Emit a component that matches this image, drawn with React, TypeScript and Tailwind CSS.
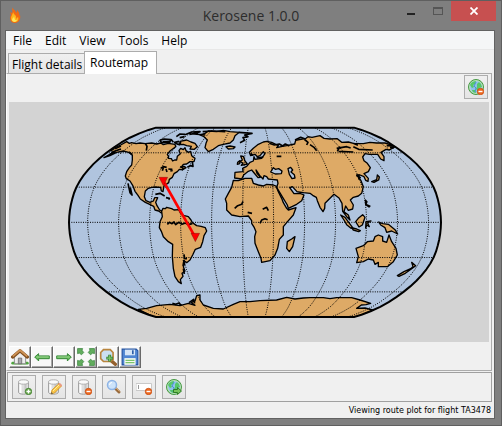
import React, { useState } from "react";

/* ---------- Map ---------- */

// Robinson projection table, one entry for every 5 degrees of latitude.
const ROB_X = [1, 0.9986, 0.9954, 0.99, 0.9822, 0.973, 0.96, 0.9427, 0.9216, 0.8962, 0.8679, 0.835, 0.7986, 0.7597, 0.7186, 0.6732, 0.6213, 0.5722, 0.5322];
const ROB_Y = [0, 0.062, 0.124, 0.186, 0.248, 0.31, 0.372, 0.434, 0.4958, 0.5571, 0.6176, 0.6769, 0.7346, 0.7903, 0.8435, 0.8936, 0.9394, 0.9761, 1];
const CENTRE = { x: 765, y: 667, lon: 12 };

function project(lon: number, lat: number): string {
  const i = Math.abs(lat) / 5;
  const x = CENTRE.x + 3.1 * (lon - CENTRE.lon) * ROB_X[i];
  const y = CENTRE.y - 284 * ROB_Y[i] * Math.sign(lat);
  return `${x.toFixed(1)},${y.toFixed(1)}`;
}

const LATS = Array.from({ length: 37 }, (_, i) => i * 5 - 90);
const meridian = (lon: number) => LATS.map((lat) => project(lon, lat));
const OUTLINE = [...meridian(-168), ...meridian(192).reverse()].join(" ");
const MERIDIANS = Array.from({ length: 12 }, (_, i) => meridian(i * 30 - 150).join(" "));
const PARALLELS = [-60, -30, 0, 30, 60].map((lat) => `${project(-168, lat)} ${project(192, lat)}`);

const LAND = [
  // North and Central America
  "312,473 330,463 345,455 330,452 345,443 362,435 380,425 388,430 395,428 408,431 420,429 436,431 455,429 470,432 482,429 490,434 505,430 525,433 527,440 510,453 502,463 506,470 505,475 514,476 518,483 524,480 530,480 532,469 541,461 537,452 542,445 550,449 555,443 558,452 565,457 572,454 575,467 585,475 582,485 570,485 560,492 550,493 545,500 552,499 558,503 548,509 538,508 532,515 522,521 517,532 508,538 506,548 492,558 490,568 489,575 484,573 482,562 466,561 455,562 445,565 436,573 433,590 438,602 450,607 460,603 464,593 473,593 467,607 471,617 479,630 491,635 484,639 476,633 465,630 461,619 449,613 436,607 421,597 414,586 405,574 398,556 390,543 379,536 376,528 380,515 388,503 395,495 397,480 397,466 386,457 370,453 350,457 330,467",
  // South America
  "485,634 489,625 496,626 500,622 515,626 522,630 536,629 542,640 550,646 565,650 573,660 577,668 590,677 603,679 616,683 620,693 612,707 608,725 602,742 586,748 578,765 570,780 560,788 550,781 554,792 550,800 555,813 546,820 549,829 541,839 544,851 535,845 525,830 520,805 517,770 518,733 505,725 490,710 484,694 478,683 480,665 487,650",
  // Greenland and Iceland
  "615,400 625,393 650,395 670,391 690,395 718,397 705,407 700,420 690,429 670,433 655,437 640,448 625,455 615,443 618,430 622,420 612,410 600,405",
  "678,440 690,438 705,441 700,446 685,447",
  // Baffin Island
  "540,424 560,420 573,426 585,430 592,440 583,448 570,447 574,439 560,437 550,433 540,434",
  // Africa
  "700,541 715,542 735,535 755,535 760,550 775,555 790,558 800,553 820,555 828,558 835,575 845,595 850,608 860,625 865,630 888,623 880,645 860,668 850,680 850,705 838,718 835,735 833,745 825,765 810,782 785,787 783,775 775,755 765,730 764,710 768,695 763,683 755,670 755,662 745,648 720,650 695,645 680,630 680,610 676,597 685,580 695,562",
  // Europe and Asia
  "704,534 705,517 729,515 728,505 740,499 750,487 760,483 762,470 765,478 785,475 795,461 790,455 780,467 772,470 765,463 752,467 748,457 760,445 775,433 790,426 800,424 815,427 835,437 830,443 847,439 860,437 884,432 887,421 907,417 918,415 924,410 936,412 960,407 972,415 990,417 1012,416 1025,427 1045,426 1060,430 1090,431 1110,427 1130,429 1155,429 1187,439 1168,450 1158,448 1143,457 1152,470 1152,482 1142,477 1133,463 1120,463 1108,463 1095,461 1088,471 1092,482 1102,490 1111,503 1105,515 1092,521 1105,535 1104,544 1097,541 1092,530 1080,525 1070,525 1076,532 1083,542 1090,560 1085,580 1075,588 1060,592 1051,600 1060,615 1058,627 1045,631 1037,618 1032,635 1045,645 1050,660 1040,650 1028,634 1026,610 1017,594 1002,583 990,595 975,610 974,625 969,635 960,622 952,602 949,592 938,586 930,580 910,578 891,575 877,560 869,563 882,581 900,580 912,585 905,602 890,613 865,625 862,615 848,592 830,562 834,550 832,540 814,538 805,537 800,530 792,527 789,537 779,526 768,510 771,520 781,532 774,533 765,522 755,510 745,514 731,525 725,537",
  // British Isles
  "720,485 727,480 722,468 730,469 735,483 742,492 724,496 729,489",
  "713,487 720,482 719,491 712,493",
  // Madagascar
  "885,710 878,740 868,755 860,745 862,725 875,717",
  // Australia and New Guinea
  "1070,788 1075,770 1068,745 1090,737 1102,725 1120,723 1125,710 1135,705 1148,710 1148,723 1160,727 1167,705 1175,725 1188,745 1192,765 1180,785 1162,800 1135,800 1135,787 1125,793 1120,780 1105,777 1090,785",
  "1136,666 1148,671 1165,673 1185,689 1193,702 1175,693 1160,697 1155,683 1142,675",
  // Indonesia, Philippines
  "1022,645 1035,652 1046,667 1058,683 1053,685 1040,674 1032,660",
  "1055,683 1070,687 1081,692 1076,695 1060,690",
  "1067,665 1075,655 1088,644 1095,652 1087,675 1077,681",
  "1098,665 1113,663 1103,669 1108,680 1100,675 1097,684",
  "1096,600 1101,605 1098,613 1110,618 1107,621 1097,614",
  // Japan, New Zealand
  "1115,545 1130,539 1132,525 1138,531 1136,540 1122,547",
  "1192,827 1212,815 1232,806 1239,800 1235,787 1247,797 1235,806 1216,820 1197,829",
  // Antarctica
  "415,928 440,925 470,917 510,913 540,917 565,910 585,916 573,907 585,903 590,887 600,885 600,900 610,915 640,925 670,927 700,913 720,905 750,905 780,902 830,900 860,892 885,897 910,894 930,893 970,893 990,896 1010,893 1055,893 1080,900 1112,910 1098,914 1084,915 1070,925 1095,924 1118,930 1065,955 470,955",
];

const SEAS = [
  "812,516 820,503 826,508 836,506 846,513 844,521 826,522",
  "864,506 872,502 878,510 873,516 883,524 885,534 876,536 868,523",
];

// Small islands, lakes and broken coastlines, drawn as strokes only.
const DETAILS = [
  "M345,446l18-8m-20,16l20-7m-23,9l-13,10m4,-16l12-4",
  "M436,430l5,9-2,13m-42,12l-10-8M384,550l6,28 6,7-5-22",
  "M480,421l12-4 20,2-3,8-24,1zm8,4h20m5-7 7,9",
  "M482,505l8-5 10,2m-13,10 3-9m8,4 3,9m4-9 12,1m-6,5 7-2",
  "M522,428l15-4m-8-14 11-8 15,1m-16,10 15-3m-28,20 12,4 5-7",
  "M555,404l20-8 25-1-18,7 34,3m-48-2 26-4m14-4 30-2 38,2m40,2 40,3-22,5 10,5-15,3 5,8-14,7",
  "M466,583l14-3 14,8m4,5 10,2-2,4",
  "M502,673l6-6 8,4 6-5 5,8 9-7 10,6 10-4 8,5 13-3",
  "M552,763l2,13 7,0m-9,5-3,17m1,8 3,16",
  "M540,500l8,3m14-1 9-5 8,2-2-13M551,503l-5,8",
  "M752,460l7,6m11,8 20-3M808,430l15,5 15-3 10,6 8-6 12,6M885,420l17-8 14,5m-4,0 12,10-4,8",
  "M830,469l14,0 M704,625l9-8 12-4 4-9m14,33 13,3",
  "M788,628l12-6 5,10M780,670l5-10 10-4 8,3",
  "M930,434l12,8 8,10M1010,445l30-5 12,4m-36,10 44,2M1020,440l-8,14M1060,440l16,8 42,2M1060,430l14,6M1160,437l24,1m-14,5 12,0M1070,525l12,9m-8-8 4,13M1069,528l10-3",
  "M567,908l14-10 3,12M517,910l10,3 10-4 6,7",
];

function RouteMap() {
  return (
    <svg viewBox="27 306 1440 720" className="block h-full w-full" role="img" aria-label="Route map">
      <defs>
        <clipPath id="globe">
          <polygon points={OUTLINE} />
        </clipPath>
      </defs>
      <polygon points={OUTLINE} fill="#b0c4de" />
      <g clipPath="url(#globe)" stroke="#000" strokeWidth="4" strokeLinejoin="round">
        {LAND.map((points) => (
          <polygon key={points} points={points} fill="#deaa66" />
        ))}
        {SEAS.map((points) => (
          <polygon key={points} points={points} fill="#b0c4de" />
        ))}
        {DETAILS.map((d) => (
          <path key={d} d={d} fill="none" strokeWidth="5" />
        ))}
      </g>
      <g fill="none" stroke="#000" strokeWidth="3" strokeDasharray="3 4">
        {[...MERIDIANS, ...PARALLELS].map((points) => (
          <polyline key={points} points={points} />
        ))}
      </g>
      <polygon points={OUTLINE} fill="none" stroke="#000" strokeWidth="6" strokeLinejoin="round" />
      <path d="M490,543 586,712" stroke="#f00" strokeWidth="8" />
      <g fill="#f00" stroke="#500" strokeWidth="1">
        <path d="M477,532h26l-13,25z" />
        <path d="M573,700h26l-13,25z" />
      </g>
    </svg>
  );
}

/* ---------- Icons ---------- */

function Icon({ children, size = "size-4" }: { children: React.ReactNode; size?: string }) {
  return (
    <svg viewBox="0 0 16 16" className={size} aria-hidden="true">
      {children}
    </svg>
  );
}

const Flame = () => (
  <Icon>
    <path d="M5 0c0 2 4 3 4 6 1-1 1-2 1-3 2 2 3 4 2 6l1-1c1 4-1 8-5 8-5 0-6-5-4-8L3 5l2 1c1-2 0-4 0-6z" fill="#f26a12" />
    <path d="M6 5c0 2-2 4-2 6 0 3 2 4 4 4 3 0 4-3 3-5l-2 2c1-3-1-4-2-5z" fill="#ffb51c" />
    <path d="M7 9c0 2-2 2-2 4s4 3 5 0l-2 0z" fill="#ffe65a" />
  </Icon>
);

const Minus = () => (
  <>
    <circle cx="12.500" cy="12.500" r="3.200" fill="#ee6a22" stroke="#c84a0c" strokeWidth="0.800" />
    <path d="M10.500 12.500h4" stroke="#fff" strokeWidth="1.400" />
  </>
);

const Globe = () => (
  <>
    <circle cx="8" cy="8" r="7.500" fill="#8fcf8a" stroke="#479a45" />
    <circle cx="8" cy="8" r="6.300" fill="#8fc1ea" stroke="#d4eecb" strokeWidth="0.700" />
    <path d="M2 6c1-3 4-4 6-4L7 5 5 6l1 2-2 1zM9 5l2-2 2 2 1 3-3 1-1 3-2-2 1-2zM4 11l3 0 1 3C6 14 4 13 4 11z" fill="#55c868" />
    <path d="M8 3 6 7l2 2-1 4" stroke="#4a91d0" fill="none" />
  </>
);

const Cylinder = () => (
  <>
    <path d="M2.500 3v10c0 3 10 3 10 0V3" fill="#dedede" stroke="#a4a4a4" />
    <path d="M4.500 5v9" stroke="#fff" strokeWidth="2" />
    <path d="M9.500 5v9.500" stroke="#c4c4c4" strokeWidth="2" />
    <ellipse cx="7.500" cy="3" rx="5" ry="2.200" fill="#fafafa" stroke="#b0b0b0" />
  </>
);

const GlobeRemove = () => <Icon><Globe /><Minus /></Icon>;

const GlobeGo = () => (
  <Icon>
    <Globe />
    <path d="M7.500 10.500h4v-2l4 3.500-4 3.500v-2h-4z" fill="#78c45c" stroke="#2e7d25" />
  </Icon>
);

const RecordAdd = () => (
  <Icon>
    <Cylinder />
    <circle cx="12.500" cy="12.500" r="3.200" fill="#6aa84f" stroke="#3f7d2b" strokeWidth="0.800" />
    <path d="M10.500 12.500h4m-2-2v4" stroke="#fff" strokeWidth="1.300" />
  </Icon>
);

const RecordEdit = () => (
  <Icon>
    <Cylinder />
    <path d="M5 15l1-4 7-6.500 2.500 2.500-7 7z" fill="#f9c74a" stroke="#cf8e1b" strokeWidth="0.800" />
    <path d="M7 12l6-6" stroke="#fff0a0" />
    <path d="M13 4.500 15.500 7" stroke="#e99b83" strokeWidth="2" />
    <path d="M5 15l.5-2 1.500 1.500z" fill="#555" />
  </Icon>
);

const RecordRemove = () => <Icon><Cylinder /><Minus /></Icon>;

const Magnifier = () => (
  <Icon>
    <path d="M9 9l4 4" stroke="#9a6b3c" strokeWidth="3" strokeLinecap="round" />
    <path d="M10 9l3.500 3.500" stroke="#d8a46a" />
    <circle cx="6" cy="6" r="4.500" fill="#cde3fa" stroke="#8eb4e6" strokeWidth="1.500" />
    <path d="M3.500 6A2.500 2.500 0 0 1 6 3.500" stroke="#fff" fill="none" />
  </Icon>
);

const FieldRemove = () => (
  <Icon>
    <path d="M0 4.500h15.500v7H0z" fill="#fff" stroke="#c9c9c9" />
    <path d="M2.500 6v4" stroke="#999" />
    <Minus />
  </Icon>
);

const Home = () => (
  <Icon size="size-[18px]">
    <path d="M1.500 13.500h13" stroke="#4ea63e" strokeWidth="2.500" strokeLinecap="round" />
    <path d="M3 7l5-4 5 4v7H3z" fill="#eee" stroke="#888" strokeWidth="0.800" />
    <path d="M6.500 9h3v5h-3z" fill="#a9a9ae" stroke="#666" strokeWidth="0.700" />
    <path d="M1.500 8 8 2.500 14.500 8" fill="none" stroke="#82501f" strokeWidth="3" strokeLinejoin="round" strokeLinecap="round" />
    <path d="M1.500 7.500 8 2 14.500 7.500" fill="none" stroke="#cf9355" strokeWidth="1.600" />
  </Icon>
);

const ArrowLeft = () => (
  <Icon size="size-[18px]">
    <path d="M1.500 8 5 5v2h9.500v2.500H5v2z" fill="#62b955" stroke="#2e8130" strokeWidth="0.800" strokeLinejoin="round" />
    <path d="M3 8h11" stroke="#a8dda0" strokeWidth="0.800" />
  </Icon>
);

const ArrowRight = () => (
  <Icon size="size-[18px]">
    <path d="M14.500 8 11 5v2H1.500v2.500H11v2z" fill="#62b955" stroke="#2e8130" strokeWidth="0.800" strokeLinejoin="round" />
    <path d="M2 8h11" stroke="#a8dda0" strokeWidth="0.800" />
  </Icon>
);

const Pan = () => (
  <Icon size="size-[18px]">
    <path
      d="M.5.5H5L4.500 2 6 4 4 6 2 4.500.5 5zM15.500.5H11l.5 1.500L10 4l2 2 2-1.500 1.500.5zM.5 15.500H5L4.500 14 6 12l-2-2-2 1.500L.5 11zM15.500 15.500H11l.5-1.500-1.500-2 2-2 2 1.500 1.500-.5z"
      fill="#62ad5e"
      stroke="#2f7e36"
      strokeWidth="0.600"
    />
  </Icon>
);

const ZoomRect = () => (
  <Icon size="size-[18px]">
    <path d="M10.500 11l4 3.500" stroke="#94602d" strokeWidth="3" strokeLinecap="round" />
    <path d="M4 1.500h6L12.500 4v6L10 12H4L1.500 9.500V4z" fill="#cbdff2" stroke="#b9853e" strokeWidth="1.500" />
    <path d="M6.500 9h6m-3-3v6" stroke="#2f7d31" strokeWidth="2.600" />
    <path d="M7 9h5m-2.500-2.500v5" stroke="#79c469" strokeWidth="1.200" />
  </Icon>
);

const Save = () => (
  <Icon size="size-[18px]">
    <path d="M1 1h12.500L15 2.500V15H1z" fill="#4f86d2" stroke="#2352a0" />
    <path d="M3.500 1.500h9v5h-9z" fill="#d5e5f6" />
    <path d="M10.500 2v3.500" stroke="#2c5da8" strokeWidth="1.500" />
    <path d="M3 9h10v6H3z" fill="#f6fbf0" />
    <path d="M4 11h8m-8 2h8" stroke="#7cc46b" />
  </Icon>
);

/* ---------- Controls ---------- */

type ToolProps = { label: string; children: React.ReactNode };

const FlatTool = ({ label, children }: ToolProps) => (
  <button aria-label={label} title={label} className="flex size-6 shrink-0 items-center justify-center border border-[#adadad] bg-gradient-to-b from-[#f0f0f0] to-[#e5e5e5]">
    {children}
  </button>
);

const RaisedTool = ({ label, children }: ToolProps) => (
  <button aria-label={label} title={label} className="flex size-[22px] shrink-0 items-center justify-center border border-t-white border-r-[#696969] border-b-[#696969] border-l-white bg-[#f8f8f8] shadow-[inset_-1px_-1px_0_#a8a8a8]">
    {children}
  </button>
);

const MENUS = ["File", "Edit", "View", "Tools", "Help"];
const TABS = ["Flight details", "Routemap"];

export default function App() {
  const [tab, setTab] = useState("Routemap");
  return (
    <div className="flex h-screen flex-col border border-[#5f5f5f] bg-[#7f7f7f] px-1 pb-1.5 font-['Open_Sans','Noto_Sans',sans-serif] text-xs text-black">
      <header className="relative flex h-[29px] shrink-0 items-start justify-between">
        <span className="pt-1.5 pl-0.5"><Flame /></span>
        <h1 className="absolute inset-x-0 top-1 text-center text-[14px] leading-[22px] text-[#2d2d2d]">Kerosene 1.0.0</h1>
        <div className="relative flex pr-px">
          <button aria-label="Minimize" className="flex h-5 w-[27px] items-center justify-center">
            <span className="mt-1.5 h-0.5 w-2 bg-[#222]" />
          </button>
          <button aria-label="Maximize" className="flex h-5 w-[27px] items-center justify-center">
            <span className="h-2 w-2.5 border border-t-2 border-[#555]" />
          </button>
          <button aria-label="Close" className="flex h-5 w-[45px] items-center justify-center bg-[#c75050]">
            <svg viewBox="0 0 8 8" className="size-2" aria-hidden="true">
              <path d="M.5.5l7 7m0-7l-7 7" stroke="#fff" strokeWidth="1.800" />
            </svg>
          </button>
        </div>
      </header>

      <div className="mr-0.5 flex min-h-0 flex-1 flex-col border border-[#626262] bg-[#f0f0f0]">
        <nav className="flex h-[19px] shrink-0 items-center gap-px border-b border-[#e8e8e8] bg-[#f5f6f7] pt-0.5 pl-px">
          {MENUS.map((m) => (
            <button key={m} className="px-1.5 leading-4">{m}</button>
          ))}
        </nav>

        <div role="tablist" className="flex h-[23px] shrink-0 items-end pl-0.5">
          {TABS.map((t) => (
            <button
              key={t}
              role="tab"
              aria-selected={t === tab}
              onClick={() => setTab(t)}
              className={
                t === tab
                  ? "relative -mb-px h-[23px] w-[73px] border border-b-0 border-[#acacac] bg-white pb-px pl-[5px] text-left"
                  : "h-5 w-[76px] border border-r-0 border-b-0 border-[#acacac] bg-gradient-to-b from-[#f0f0f0] to-[#e5e5e5] pt-0.5 pl-[3px] text-left whitespace-nowrap"
              }
            >
              {t}
            </button>
          ))}
        </div>

        <main className="mr-0.5 flex min-h-0 flex-1 flex-col border border-[#acacac] border-l-white px-0.5">
          <div className="flex shrink-0 justify-end px-px pt-px pb-[3px]">
            <FlatTool label="Clear map"><GlobeRemove /></FlatTool>
          </div>
          <div className="min-h-0 flex-1 bg-[#d3d3d3]">
            <RouteMap />
          </div>
          <div className="flex shrink-0 pt-1 pb-0.5">
            <RaisedTool label="Home"><Home /></RaisedTool>
            <RaisedTool label="Back"><ArrowLeft /></RaisedTool>
            <RaisedTool label="Forward"><ArrowRight /></RaisedTool>
            <RaisedTool label="Pan"><Pan /></RaisedTool>
            <RaisedTool label="Zoom"><ZoomRect /></RaisedTool>
            <RaisedTool label="Save"><Save /></RaisedTool>
          </div>
        </main>

        <div className="mt-px mr-0.5 ml-px flex shrink-0 gap-1.5 border border-[#a0a0a0] px-1 py-0.5">
          <FlatTool label="Add record"><RecordAdd /></FlatTool>
          <FlatTool label="Edit record"><RecordEdit /></FlatTool>
          <FlatTool label="Delete record"><RecordRemove /></FlatTool>
          <FlatTool label="Search"><Magnifier /></FlatTool>
          <FlatTool label="Clear field"><FieldRemove /></FlatTool>
          <FlatTool label="Plot route"><GlobeGo /></FlatTool>
        </div>

        <footer className="h-4 shrink-0 pr-[3px] text-right font-['DejaVu_Sans',sans-serif] text-[8px] leading-[18px]">
          Viewing route plot for flight TA3478
        </footer>
      </div>
    </div>
  );
}
